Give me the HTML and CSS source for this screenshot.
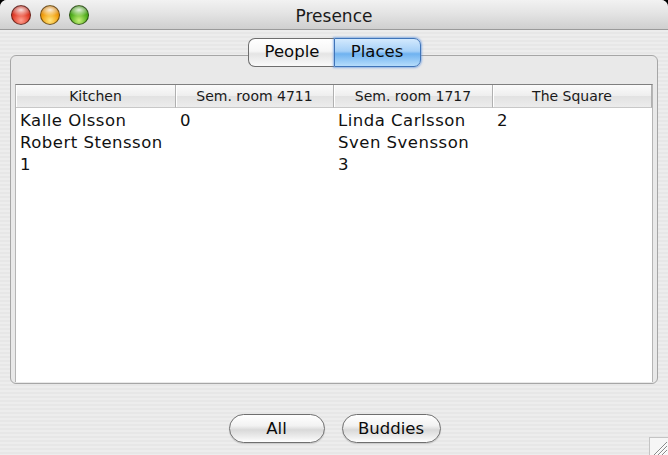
FILE: index.html
```html
<!DOCTYPE html>
<html>
<head>
<meta charset="utf-8">
<link rel="stylesheet" href="styles.css">
</head>
<body>
<div class="window">
  <div class="titlebar">
    <div class="lights">
      <span class="light red"></span>
      <span class="light yellow"></span>
      <span class="light green"></span>
    </div>
    <div class="title">Presence</div>
  </div>
  <div class="content">
    <div class="tabs">
      <div class="seg">People</div>
      <div class="seg selected">Places</div>
    </div>
    <div class="pane">
      <div class="table">
        <div class="th">Kitchen</div>
        <div class="th">Sem. room 4711</div>
        <div class="th">Sem. room 1717</div>
        <div class="th last">The Square</div>
        <div class="td">Kalle Olsson<br>Robert Stensson<br>1</div>
        <div class="td">0</div>
        <div class="td">Linda Carlsson<br>Sven Svensson<br>3</div>
        <div class="td">2</div>
      </div>
    </div>
    <div class="buttons">
      <div class="btn btn-all">All</div>
      <div class="btn btn-buddies">Buddies</div>
    </div>
    <svg class="grip" width="19" height="18" viewBox="0 0 19 18">
      <rect x="0.5" y="0.5" width="19" height="18" fill="#f6f6f6" stroke="#c4c4c4"/>
      <line x1="5" y1="18" x2="18" y2="5" stroke="#8a8a8a" stroke-width="1"/>
      <line x1="6" y1="18" x2="18" y2="6" stroke="#ffffff" stroke-width="1"/>
      <line x1="9" y1="18" x2="18" y2="9" stroke="#8a8a8a" stroke-width="1"/>
      <line x1="10" y1="18" x2="18" y2="10" stroke="#ffffff" stroke-width="1"/>
      <line x1="13" y1="18" x2="18" y2="13" stroke="#8a8a8a" stroke-width="1"/>
      <line x1="14" y1="18" x2="18" y2="14" stroke="#ffffff" stroke-width="1"/>
    </svg>
  </div>
</div>
</body>
</html>
```
FILE: styles.css
```css
html, body {
  margin: 0;
  padding: 0;
  background: #000;
}
body {
  width: 668px;
  height: 455px;
  overflow: hidden;
  font-family: "DejaVu Sans", "Liberation Sans", sans-serif;
  color: #000;
}
.window {
  width: 668px;
  height: 455px;
  border-radius: 7px 7px 0 0;
  overflow: hidden;
  display: flex;
  flex-direction: column;
  background: #ececec;
}
.titlebar {
  height: 29px;
  flex: none;
  background: linear-gradient(#f2f2f2, #e4e4e4 45%, #cfcfcf);
  border-bottom: 1px solid #9a9a9a;
  display: flex;
  align-items: center;
  position: relative;
}
.lights {
  display: flex;
  gap: 9px;
  padding-left: 11px;
  margin-top: 1px;
}
.light {
  width: 20px;
  height: 20px;
  border-radius: 50%;
  box-sizing: border-box;
  border: 1px solid rgba(0,0,0,0.5);
}
.red {
  background:
    radial-gradient(ellipse 60% 35% at 50% 22%, rgba(255,255,255,0.85) 0%, rgba(255,255,255,0) 100%),
    radial-gradient(circle at 50% 80%, #ffa090 0%, #e2402c 50%, #9e1008 100%);
}
.yellow {
  background:
    radial-gradient(ellipse 60% 35% at 50% 22%, rgba(255,255,255,0.85) 0%, rgba(255,255,255,0) 100%),
    radial-gradient(circle at 50% 80%, #ffe680 0%, #f2a010 50%, #b06000 100%);
}
.green {
  background:
    radial-gradient(ellipse 60% 35% at 50% 22%, rgba(255,255,255,0.85) 0%, rgba(255,255,255,0) 100%),
    radial-gradient(circle at 50% 80%, #c8f27a 0%, #54b020 50%, #287408 100%);
}
.title {
  position: absolute;
  left: 0;
  right: 0;
  top: 2px;
  bottom: 0;
  display: flex;
  align-items: center;
  justify-content: center;
  font-size: 17px;
  color: #1a1a1a;
  pointer-events: none;
}
.content {
  flex: 1;
  position: relative;
  display: flex;
  flex-direction: column;
  background: repeating-linear-gradient(#ededed 0, #ededed 2px, #e7e7e7 2px, #e7e7e7 4px);
}
.tabs {
  margin-top: 8px;
  display: flex;
  justify-content: center;
  position: relative;
  z-index: 2;
  height: 29px;
}
.seg {
  box-sizing: border-box;
  height: 29px;
  line-height: 26px;
  font-size: 16.5px;
  text-align: center;
  border: 1px solid #6e6e6e;
  color: #0a0a0a;
  background: linear-gradient(#ffffff, #f6f6f6 45%, #e4e4e4 55%, #fafafa);
}
.seg:first-child {
  width: 86px;
  border-radius: 7px 0 0 7px;
  border-right: none;
  padding-left: 2px;
}
.seg.selected {
  width: 87px;
  border-radius: 0 7px 7px 0;
  border-color: #3f74b8;
  background: linear-gradient(#d3e9fd, #a6d0f7 45%, #6fb2f0 55%, #b6ddfb);
  box-shadow: 0 0 2px 1px rgba(80,140,225,0.6);
}
.pane {
  margin: -12px 10px 0 10px;
  height: 329px;
  box-sizing: border-box;
  border: 1px solid #a6a6a6;
  border-radius: 6px;
  background: #e9e9e9;
  padding: 28px 4px 1px 4px;
  display: flex;
  flex-direction: column;
}
.table {
  flex: 1;
  background: #fff;
  border-top: 1px solid #7f7f7f;
  border-left: 1px solid #b5b5b5;
  border-right: 1px solid #b5b5b5;
  display: grid;
  grid-template-columns: 160px 158px 159px 159px;
  grid-template-rows: 23px 1fr;
  align-content: start;
}
.th {
  box-sizing: border-box;
  height: 23px;
  font-size: 14px;
  color: #1a1a1a;
  text-align: center;
  line-height: 22px;
  background: linear-gradient(#fbfbfb, #eeeeee 50%, #e2e2e2 52%, #ececec);
  border-right: 1px solid #b0b0b0;
  border-bottom: 1px solid #c8c8c8;
  box-shadow: inset 1px 0 0 #ffffff;
}
.th.last {
  border-right: 1px solid #b0b0b0;
}
.td {
  font-size: 16.5px;
  letter-spacing: 0.5px;
  line-height: 22px;
  padding: 2px 3px 0 4px;
  color: #111;
}
.buttons {
  margin-top: 30px;
  display: flex;
  justify-content: center;
  gap: 17px;
  padding-left: 1px;
}
.btn {
  box-sizing: border-box;
  height: 29px;
  line-height: 27px;
  font-size: 16.5px;
  text-align: center;
  color: #0a0a0a;
  border: 1px solid #6f6f6f;
  border-radius: 15px;
  background: linear-gradient(#ffffff, #f2f2f2 40%, #d9d9d9 55%, #f0f0f0 85%, #ffffff);
  box-shadow: 0 1px 1px rgba(0,0,0,0.15);
}
.btn-all {
  width: 96px;
}
.btn-buddies {
  width: 99px;
}
.grip {
  position: absolute;
  right: 0;
  bottom: 0;
}
```
